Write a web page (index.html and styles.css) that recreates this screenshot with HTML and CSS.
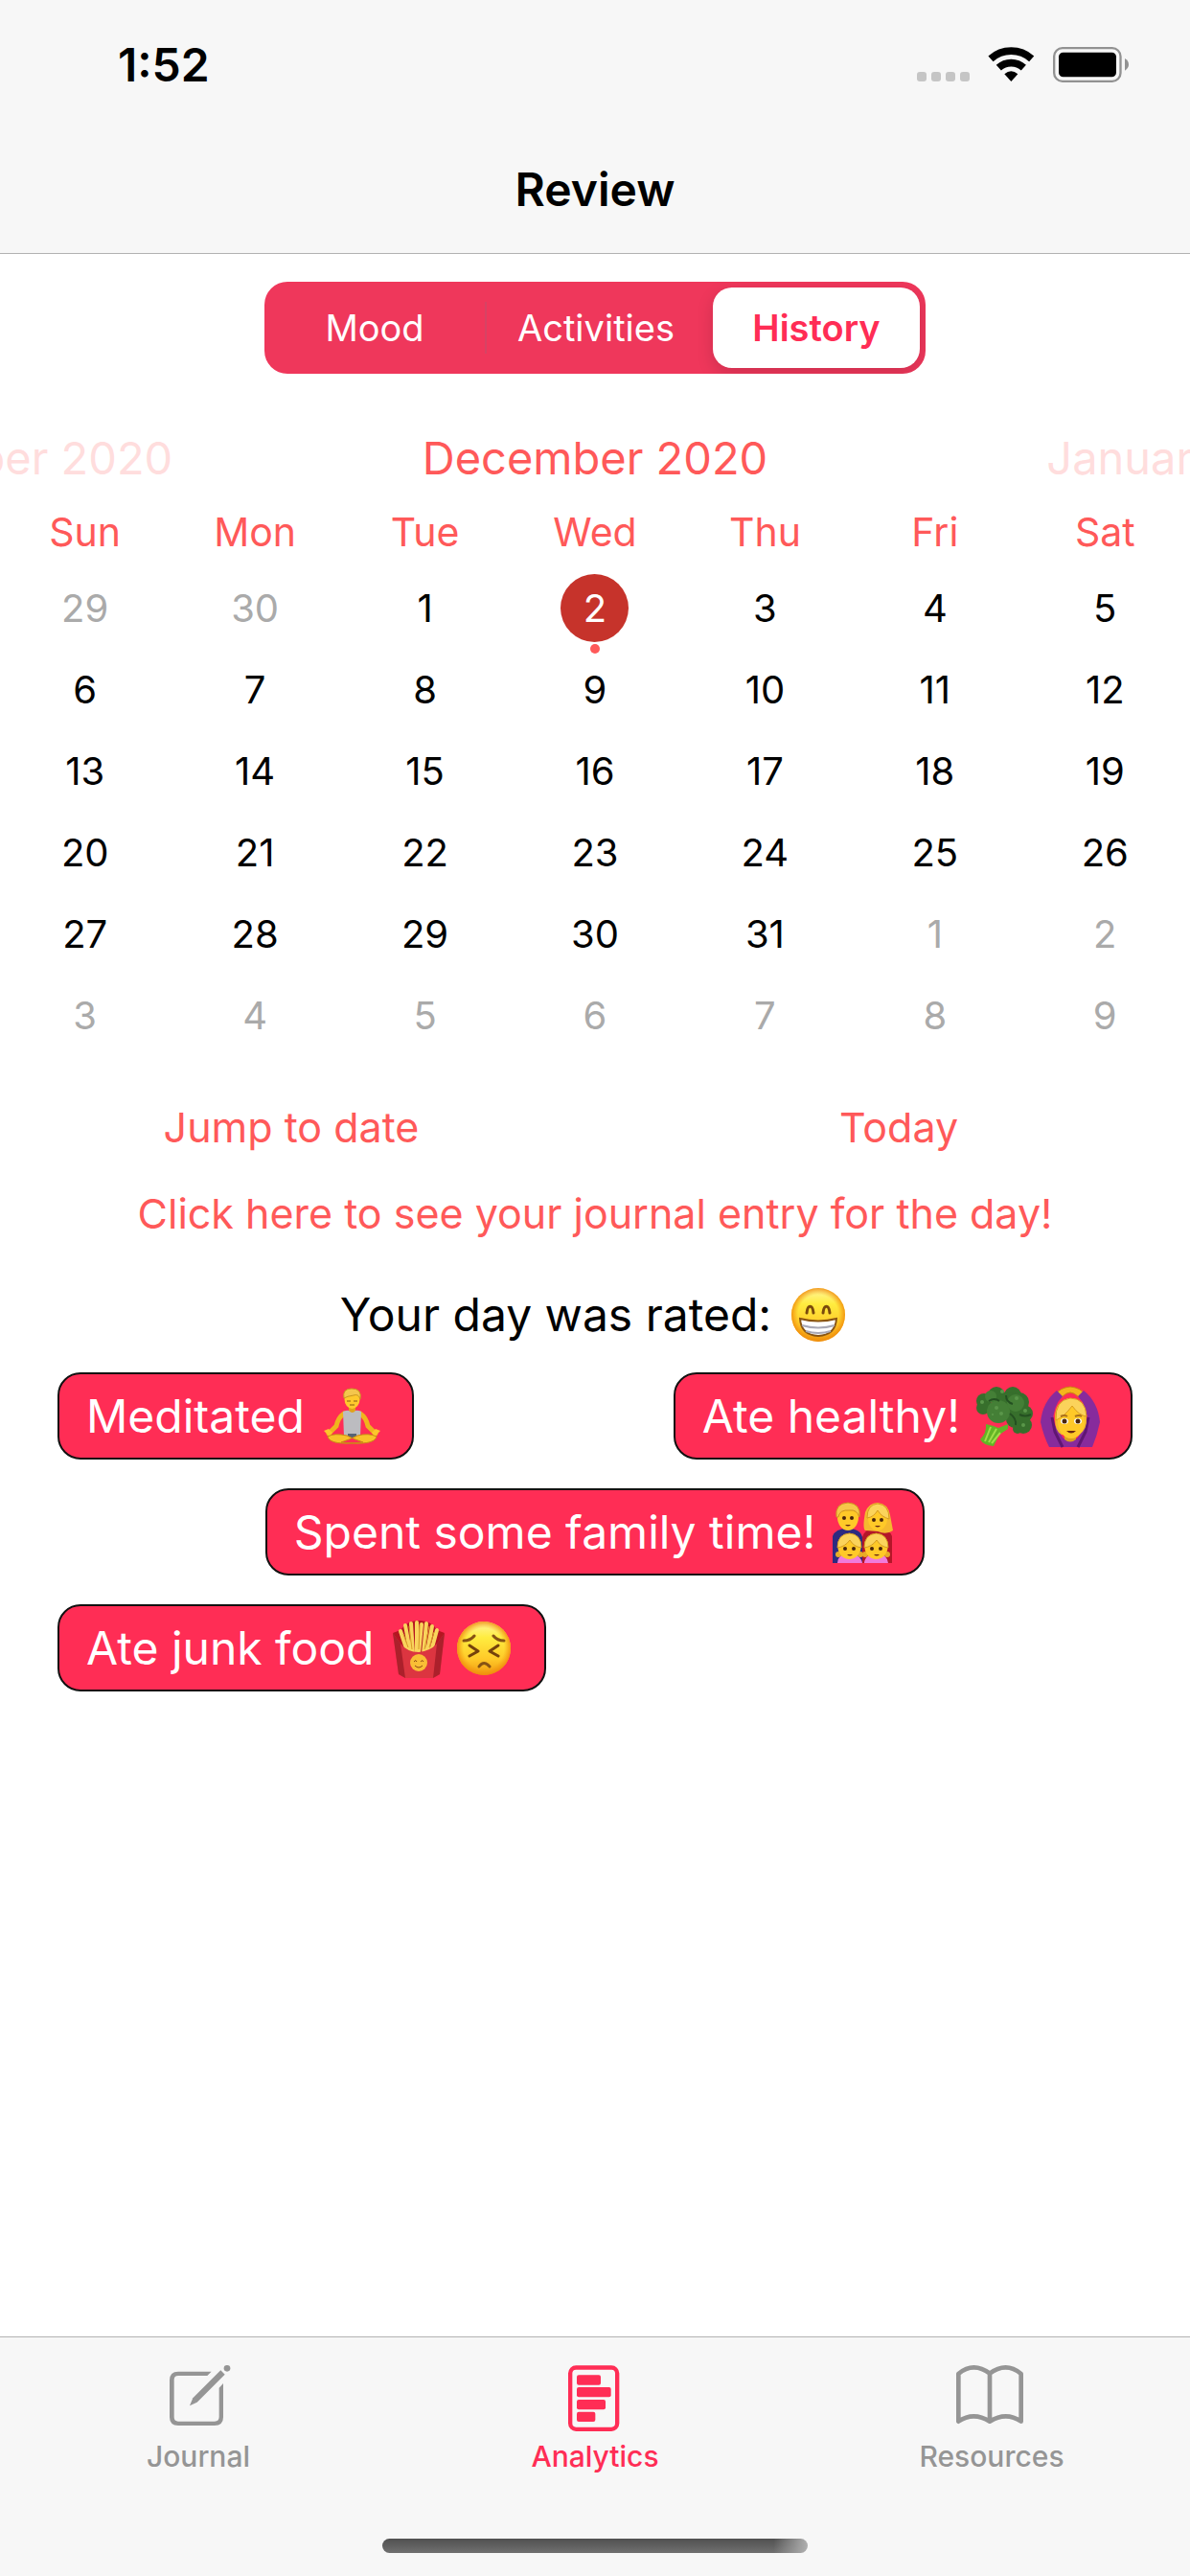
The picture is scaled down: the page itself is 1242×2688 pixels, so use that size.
FILE: index.html
```html
<!DOCTYPE html>
<html lang="en">
<head>
<meta charset="utf-8">
<meta name="viewport" content="width=device-width, initial-scale=1">
<title>Review</title>
<link rel="stylesheet" href="styles.css">
</head>
<body>
<header class="top">
  <div class="status">
    <time class="clock">1:52</time>
    <svg class="status-icons" viewBox="0 0 780 180" role="img" aria-label="Wi-Fi on, battery full">
      <g fill="#c5c5c5"><rect x="51" y="105" width="30" height="30" rx="9"/><rect x="96" y="105" width="30" height="30" rx="9"/><rect x="141" y="105" width="30" height="30" rx="9"/><rect x="186" y="105" width="30" height="30" rx="9"/></g>
      <g fill="none" stroke="#000" stroke-width="23"><path d="M282 64A95.500 95.500 0 0 1 410 64"/><path d="M307 92A58 58 0 0 1 385 92"/></g>
      <path d="M346 135L325 112Q346 94 367 112Z"/>
      <rect x="480.500" y="30.500" width="208" height="104" rx="26" fill="none" stroke="#929292" stroke-width="7"/>
      <rect x="495" y="44" width="180" height="77" rx="14"/>
      <path d="M702 63Q714 70 714 82T702 101Z" fill="#929292"/>
    </svg>
  </div>
  <h1 class="title">Review</h1>
</header>

<main class="content">
  <div class="segments" role="group" aria-label="Review section">
    <button class="segment" type="button">Mood</button>
    <button class="segment segment-split" type="button">Activities</button>
    <button class="segment segment-on" type="button" aria-pressed="true">History</button>
  </div>

  <section class="calendar" aria-label="Calendar">
    <div class="months">
      <span class="month month-side">November 2020</span>
      <h2 class="month">December 2020</h2>
      <span class="month month-side">January 2021</span>
    </div>
    <table class="days">
      <thead><tr><th>Sun</th><th>Mon</th><th>Tue</th><th>Wed</th><th>Thu</th><th>Fri</th><th>Sat</th></tr></thead>
      <tbody>
        <tr><td class="out">29</td><td class="out">30</td><td>1</td><td><span class="selected">2</span></td><td>3</td><td>4</td><td>5</td></tr>
        <tr><td>6</td><td>7</td><td>8</td><td>9</td><td>10</td><td>11</td><td>12</td></tr>
        <tr><td>13</td><td>14</td><td>15</td><td>16</td><td>17</td><td>18</td><td>19</td></tr>
        <tr><td>20</td><td>21</td><td>22</td><td>23</td><td>24</td><td>25</td><td>26</td></tr>
        <tr><td>27</td><td>28</td><td>29</td><td>30</td><td>31</td><td class="out">1</td><td class="out">2</td></tr>
        <tr><td class="out">3</td><td class="out">4</td><td class="out">5</td><td class="out">6</td><td class="out">7</td><td class="out">8</td><td class="out">9</td></tr>
      </tbody>
    </table>
  </section>

  <div class="actions">
    <button class="action" type="button">Jump to date</button>
    <button class="action" type="button">Today</button>
  </div>
  <button class="action" type="button">Click here to see your journal entry for the day!</button>

  <p class="rating">Your day was rated:
    <svg class="emoji" viewBox="0 0 66 66" role="img" aria-label="Beaming face">
      <defs>
        <linearGradient id="face" x1="0" y1="0" x2="0" y2="1"><stop offset="0" stop-color="#fff6a0"/><stop offset=".3" stop-color="#ffec3f"/><stop offset=".7" stop-color="#ffc928"/><stop offset="1" stop-color="#f09a10"/></linearGradient>
        <radialGradient id="rim"><stop offset=".75" stop-color="#f39a13" stop-opacity="0"/><stop offset="1" stop-color="#f08a0c" stop-opacity=".85"/></radialGradient>
      </defs>
      <circle cx="33" cy="33" r="28" fill="url(#face)"/><circle cx="33" cy="33" r="28" fill="url(#rim)"/>
      <path d="M21 31C22 22 27 22 28 31M38 31C39 22 44 22 45 31" fill="none" stroke="#7a4a0c" stroke-width="3" stroke-linecap="round"/>
      <path d="M14 37Q33 42 52 37Q51 54 33 55Q15 54 14 37Z" fill="#fff" stroke="#8a5512" stroke-width="2"/>
      <path d="M16 44Q33 49 50 44M20 50Q33 54 46 50" fill="none" stroke="#a9a9b5" stroke-width="2"/>
    </svg>
  </p>

  <ul class="tags">
    <li class="tag">Meditated
      <svg class="emoji" viewBox="0 0 66 66" role="img" aria-label="Person in lotus position">
        <path d="M25 30Q19 34 17 43L9 51M42 30Q48 34 50 43L58 51" fill="none" stroke="#efb41d" stroke-width="5" stroke-linecap="round"/>
        <path d="M4 48l5-2 4 4-3 4zM63 48l-5-2-4 4 3 4z" fill="#fcc62c"/>
        <path d="M30 20h7v10h-7z" fill="#e0a31a"/>
        <path d="M24 28Q29 26 30 27Q34 31 37 27Q39 26 43 28L42 54H25Z" fill="#bcbcc0"/>
        <path d="M29 51h9v5h-9z" fill="#566377"/>
        <path d="M8 54Q15 50 28 53Q36 57 45 60Q10 64 8 54ZM59 54Q51 50 39 53Q31 57 22 60Q57 64 59 54Z" fill="#f8c229" stroke="#c98b15"/>
        <ellipse cx="33.500" cy="15" rx="8" ry="10" fill="#ffc92d"/>
        <path d="M25 14Q23 4 33 4Q44 4 42 15Q40 9 35 11Q28 12 25 14Z" fill="#f4c64d" stroke="#c9951f"/>
        <path d="M28 17h4M35 17h4M31 21h5" stroke="#855b12" stroke-width="1"/>
      </svg>
    </li>
    <li class="tag tag-end">Ate healthy!
      <span class="pair">
        <svg class="emoji" viewBox="0 0 66 66" role="img" aria-label="Broccoli">
          <path d="M11 41L19 43L24 45L34 41L34 46L25 52L19 64Q8 63 5 57Q12 50 11 41Z" fill="#63b526"/>
          <path d="M16 44L10 59M26 50L17 61M22 46L14 60" fill="none" stroke="#a0dc48" stroke-width="2"/>
          <g fill="#376f2c"><circle cx="9" cy="17" r="8"/><circle cx="22" cy="11" r="9"/><circle cx="39" cy="11" r="9"/><circle cx="46" cy="18" r="10"/><circle cx="34" cy="21" r="13"/><circle cx="8" cy="24" r="7"/><circle cx="51" cy="30" r="9"/><circle cx="50" cy="42" r="9"/><circle cx="41" cy="36" r="9"/><circle cx="44" cy="46" r="5"/></g>
          <g fill="#447f36"><circle cx="24" cy="28" r="12"/><circle cx="42" cy="19" r="9"/><circle cx="16" cy="12" r="6"/></g>
          <path d="M14 17Q20 13 25 17M32 11Q32 18 39 20M36 30Q43 35 42 42M46 31Q52 34 58 31" fill="none" stroke="#245021" stroke-width="2"/>
          <g fill="#5a964a"><circle cx="22" cy="24" r="2"/><circle cx="27" cy="30" r="2"/><circle cx="18" cy="31" r="1"/><circle cx="43" cy="14" r="2"/><circle cx="28" cy="7" r="2"/><circle cx="52" cy="27" r="2"/><circle cx="50" cy="42" r="2"/><circle cx="7" cy="18" r="2"/></g>
        </svg>
        <svg class="emoji" viewBox="0 0 66 66" role="img" aria-label="Woman gesturing OK">
          <path d="M18 10Q22 3 33 2Q44 3 48 10L42 13Q37 8 33 8Q29 8 24 13Z" fill="#f4b41c" stroke="#c98510"/>
          <path d="M19 6Q4 18 2 39Q5 53 11 65H56Q61 53 64 39Q62 18 47 6L41 12Q51 22 51 40L40 56H26L15 40Q15 22 25 12Z" fill="#872b9c"/>
          <path d="M14 34L17 49L25 65M52 34L49 49L41 65" fill="none" stroke="#5f1672" stroke-width="3"/>
          <path d="M27 50h12v7q-6 5-12 0z" fill="#dca020"/>
          <path d="M33 14Q17 16 17 35Q17 49 24 52H42Q51 47 50 34Q49 15 33 14Z" fill="#f0b92e"/>
          <ellipse cx="34" cy="38" rx="14" ry="18" fill="#ffc928"/>
          <path d="M18 37Q17 16 33 14Q49 14 50 33Q42 32 35 22Q27 33 18 37Z" fill="#fbd35b" stroke="#d99d20"/>
          <path d="M23 33q4-2 7 0M38 33q4-2 7 0" fill="none" stroke="#ab711b" stroke-width="2"/>
          <ellipse cx="27" cy="38" rx="4" ry="3" fill="#fff"/><ellipse cx="41" cy="38" rx="4" ry="3" fill="#fff"/>
          <circle cx="27" cy="38" r="2.500" fill="#4b260b"/><circle cx="41" cy="38" r="2.500" fill="#4b260b"/>
          <path d="M29 48h10q-5 5-10 0z" fill="#6b2912"/>
        </svg>
      </span>
    </li>
    <li class="tag tag-middle">Spent some family time!
      <svg class="emoji" viewBox="0 0 66 66" role="img" aria-label="Family">
        <path d="M2 65V37Q5 29 17 29Q31 29 33 38V65Z" fill="#2d2a80"/><path d="M33 65V38Q35 29 48 29Q61 29 64 37V65Z" fill="#b41629"/>
        <path d="M36 31Q33 29 36 12Q40 2 49 2Q60 3 62 15L65 31Q58 36 49 32Z" fill="#f4b92f"/>
        <ellipse cx="18" cy="17" rx="11" ry="14" fill="#ffc928"/><path d="M6 17Q4 3 18 2Q32 3 30 17Q27 9 20 10Q9 9 8 17Z" fill="#f6c64a" stroke="#cf921d"/>
        <ellipse cx="49" cy="19" rx="10" ry="12" fill="#ffc928"/><path d="M38 18Q38 4 49 3Q61 4 61 19Q53 17 49 10Q45 17 38 18Z" fill="#fbd35b" stroke="#d69c21"/>
        <path d="M7 65Q8 55 18 55Q31 55 33 65ZM35 65Q36 55 49 55Q58 55 60 65Z" fill="#f07bdc"/>
        <g id="girl"><circle cx="8" cy="56" r="3" fill="#e8ac27"/><circle cx="31" cy="56" r="3" fill="#e8ac27"/><ellipse cx="19.500" cy="48" rx="12" ry="13" fill="#ffc928"/><path d="M7 49Q7 35 19.500 34Q32 35 32 49Q24 48 20 41Q15 48 7 49Z" fill="#fbd35b" stroke="#d69c21"/><circle cx="15" cy="50" r="2" fill="#4b260b"/><circle cx="24" cy="50" r="2" fill="#4b260b"/><path d="M17 56h6q-3 3-6 0z" fill="#6b2912"/></g>
        <use href="#girl" x="28"/>
        <g fill="#4b260b"><circle cx="14" cy="18" r="2"/><circle cx="22" cy="18" r="2"/><circle cx="45" cy="20" r="2"/><circle cx="53" cy="20" r="2"/></g>
        <path d="M15 25h6q-3 3-6 0zM46 26h6q-3 3-6 0z" fill="#6b2912"/>
      </svg>
    </li>
    <li class="tag">Ate junk food
      <span class="pair">
        <svg class="emoji" viewBox="0 0 66 66" role="img" aria-label="French fries">
          <path d="M4 17L12 14Q20 3 32 4Q44 4 50 14L58 17L52 40H10Z" fill="#b51521"/>
          <g stroke="#f9d45c" stroke-width="4" stroke-linecap="round"><path d="M12 15L19 36M17 9L22 36M23 7L25 38M29 6L29 38M34 8L31 38M39 7L36 38M45 10L40 36M50 14L44 36"/></g>
          <path d="M21 10L24 34M32 8L31 34M42 10L37 34M15 18L20 32M47 16L42 32" stroke="#d99a26" stroke-width="1"/>
          <path d="M4 17L12 28Q19 37 31 37Q43 36 50 28L58 17L53 60L46 64H17L10 60Z" fill="#dc3540"/>
          <path d="M4 17L12 28L17 64L10 60ZM58 17L50 28L46 64L53 60Z" fill="#ac202b"/>
          <circle cx="31" cy="48" r="9" fill="#f9be35"/><path d="M26 47q2-3 3 0M33 47q2-3 3 0M27 51q4 4 8 0" fill="none" stroke="#8c4513"/>
        </svg>
        <svg class="emoji" viewBox="0 0 66 66" role="img" aria-label="Persevering face">
          <circle cx="33" cy="33" r="28" fill="url(#face)"/><circle cx="33" cy="33" r="28" fill="url(#rim)"/>
          <path d="M12 25Q19 25 23 20M43 20Q47 25 54 25M28 52Q33 45 39 52" fill="none" stroke="#875314" stroke-width="3" stroke-linecap="round"/>
          <path d="M18 30L27 36L18 41M48 30L39 36L48 41" fill="none" stroke="#75420b" stroke-width="3" stroke-linecap="round" stroke-linejoin="round"/>
        </svg>
      </span>
    </li>
  </ul>
</main>

<footer class="bottom">
  <nav class="tabs" aria-label="Main">
    <a class="tab" href="#journal">
      <svg class="tab-icon" viewBox="-9 0 360 270" aria-hidden="true">
        <path d="M212 74L199 87H108Q95 87 95 100V216Q95 230 108 230H222Q236 230 236 216V125L249 111V217Q249 243 222 243H108Q81 243 81 217V101Q81 74 108 74Z" fill="currentColor"/>
        <path d="M241 70L254 83L167 170L144 181L154 157Z" fill="currentColor"/><circle cx="261" cy="64" r="10" fill="currentColor"/>
      </svg>
      Journal
    </a>
    <a class="tab tab-on" href="#analytics" aria-current="page">
      <svg class="tab-icon" viewBox="3 0 360 270" aria-hidden="true">
        <rect x="105.500" y="61.500" width="147" height="193" rx="18" fill="none" stroke="currentColor" stroke-width="13"/>
        <g fill="currentColor"><rect x="126" y="85" width="75" height="31" rx="6"/><rect x="126" y="123" width="107" height="31" rx="6"/><rect x="126" y="162" width="90" height="31" rx="6"/><rect x="126" y="200" width="58" height="31" rx="6"/></g>
      </svg>
      Analytics
    </a>
    <a class="tab" href="#resources">
      <svg class="tab-icon" viewBox="15 0 360 270" aria-hidden="true">
        <path d="M91 230V81Q138 42 189 80Q240 42 287 81V230Q240 198 189 230Q138 198 91 230ZM189 80V230" fill="none" stroke="currentColor" stroke-width="14" stroke-linejoin="round"/>
      </svg>
      Resources
    </a>
  </nav>
  <div class="home-bar"></div>
</footer>
</body>
</html>
```
FILE: styles.css
```css
* {
  box-sizing: border-box;
}

body {
  margin: 0;
  min-height: 100vh;
  display: flex;
  flex-direction: column;
  overflow-x: hidden;
  background: #fff;
  color: #000;
  font-family: Inter, "Liberation Sans", sans-serif;
  font-size: 48px;
}

button {
  border: 0;
  padding: 0;
  background: none;
  font: inherit;
}

/* Status bar and title */
.top {
  background: #f7f7f7;
  border-bottom: 1px solid #b2b2b2;
}

.status {
  display: flex;
  justify-content: space-between;
  padding: 40px 42px 0 123px;
}

.clock {
  font-size: 48px;
  line-height: 56px;
  font-weight: 600;
}

.status-icons {
  width: 260px;
  height: 60px;
}

.title {
  margin: 66px 0 34px;
  font-size: 48px;
  line-height: 64px;
  font-weight: 600;
  text-align: center;
}

.content {
  flex: 1;
  display: flex;
  flex-direction: column;
  padding-top: 29px;
}

/* Segmented control */
.segments {
  align-self: center;
  display: grid;
  grid-template-columns: repeat(3, 1fr);
  width: 690px;
  max-width: 100%;
  height: 96px;
  border-radius: 24px;
  background: #ef375b;
  overflow: hidden;
}

.segment {
  color: #fff;
  font-size: 38px;
}

.segment-split {
  margin: 21px 0;
  border-left: 2px solid #d64364;
}

.segment-on {
  margin: 6px 6px 6px 8px;
  border-radius: 20px;
  background: #fff;
  box-shadow: 0 6px 18px rgba(0, 0, 0, 0.14);
  color: #ff2d55;
  font-weight: 600;
}

/* Calendar */
.calendar {
  margin-top: 48px;
}

.months {
  display: flex;
  justify-content: center;
  overflow: hidden;
}

.month {
  flex: none;
  width: 50%;
  margin: 0;
  color: #ff5959;
  font-size: 47px;
  line-height: 80px;
  font-weight: 400;
  text-align: center;
}

.month-side {
  opacity: 0.2;
}

.days {
  width: 100%;
  table-layout: fixed;
  border-collapse: collapse;
  text-align: center;
}

.days th {
  height: 74px;
  padding: 0;
  color: #ff5959;
  font-size: 41px;
  line-height: 48px;
  font-weight: 400;
}

.days td {
  height: 85px;
  padding: 0;
  font-size: 40px;
  line-height: 48px;
}

.days .out {
  color: #aaa;
}

.selected {
  position: relative;
  display: block;
  width: 71px;
  margin: 0 auto;
  border-radius: 50%;
  background: #c6332b;
  color: #fff;
  line-height: 71px;
}

.selected::after {
  content: "";
  position: absolute;
  top: 73px;
  left: 50%;
  width: 10px;
  height: 10px;
  margin-left: -5px;
  border-radius: 50%;
  background: #ff5959;
}

/* Calendar actions */
.actions {
  display: grid;
  grid-template-columns: 1fr 1fr;
  gap: 26px;
  margin-top: 29px;
}

.action {
  color: #ff5959;
  font-size: 43px;
  line-height: 90px;
}

/* Day summary */
.rating {
  display: flex;
  justify-content: center;
  align-items: center;
  gap: 16px;
  margin: 16px 0 15px;
  line-height: 90px;
}

.emoji {
  flex: none;
  width: 66px;
  height: 66px;
}

.pair {
  display: flex;
}

.tags {
  display: flex;
  flex-wrap: wrap;
  justify-content: space-between;
  gap: 30px;
  margin: 0;
  padding: 0 60px;
  list-style: none;
}

.tag {
  display: flex;
  align-items: center;
  gap: 16px;
  height: 91px;
  padding: 0 30px 0 28px;
  border: 2px solid #111;
  border-radius: 24px;
  background: #ff2d55;
  color: #fff;
  white-space: nowrap;
}

.tag-middle {
  margin: 0 auto;
}

/* Tab bar */
.bottom {
  display: flex;
  flex-direction: column;
  align-items: center;
  background: #f7f7f7;
  border-top: 1px solid #b2b2b2;
}

.tabs {
  display: grid;
  grid-template-columns: repeat(3, 1fr);
  width: 100%;
  padding-top: 11px;
}

.tab {
  display: flex;
  flex-direction: column;
  align-items: center;
  color: #959595;
  font-size: 30px;
  line-height: 46px;
  font-weight: 500;
  text-decoration: none;
}

.tab-on {
  color: #ff2d55;
}

.tab-icon {
  width: 120px;
  height: 90px;
}

.home-bar {
  width: 444px;
  height: 15px;
  margin: 63px 0 24px;
  border-radius: 8px;
  background: linear-gradient(90deg, transparent 92%, #b0b0b0), linear-gradient(#505050, #707070);
}
```
